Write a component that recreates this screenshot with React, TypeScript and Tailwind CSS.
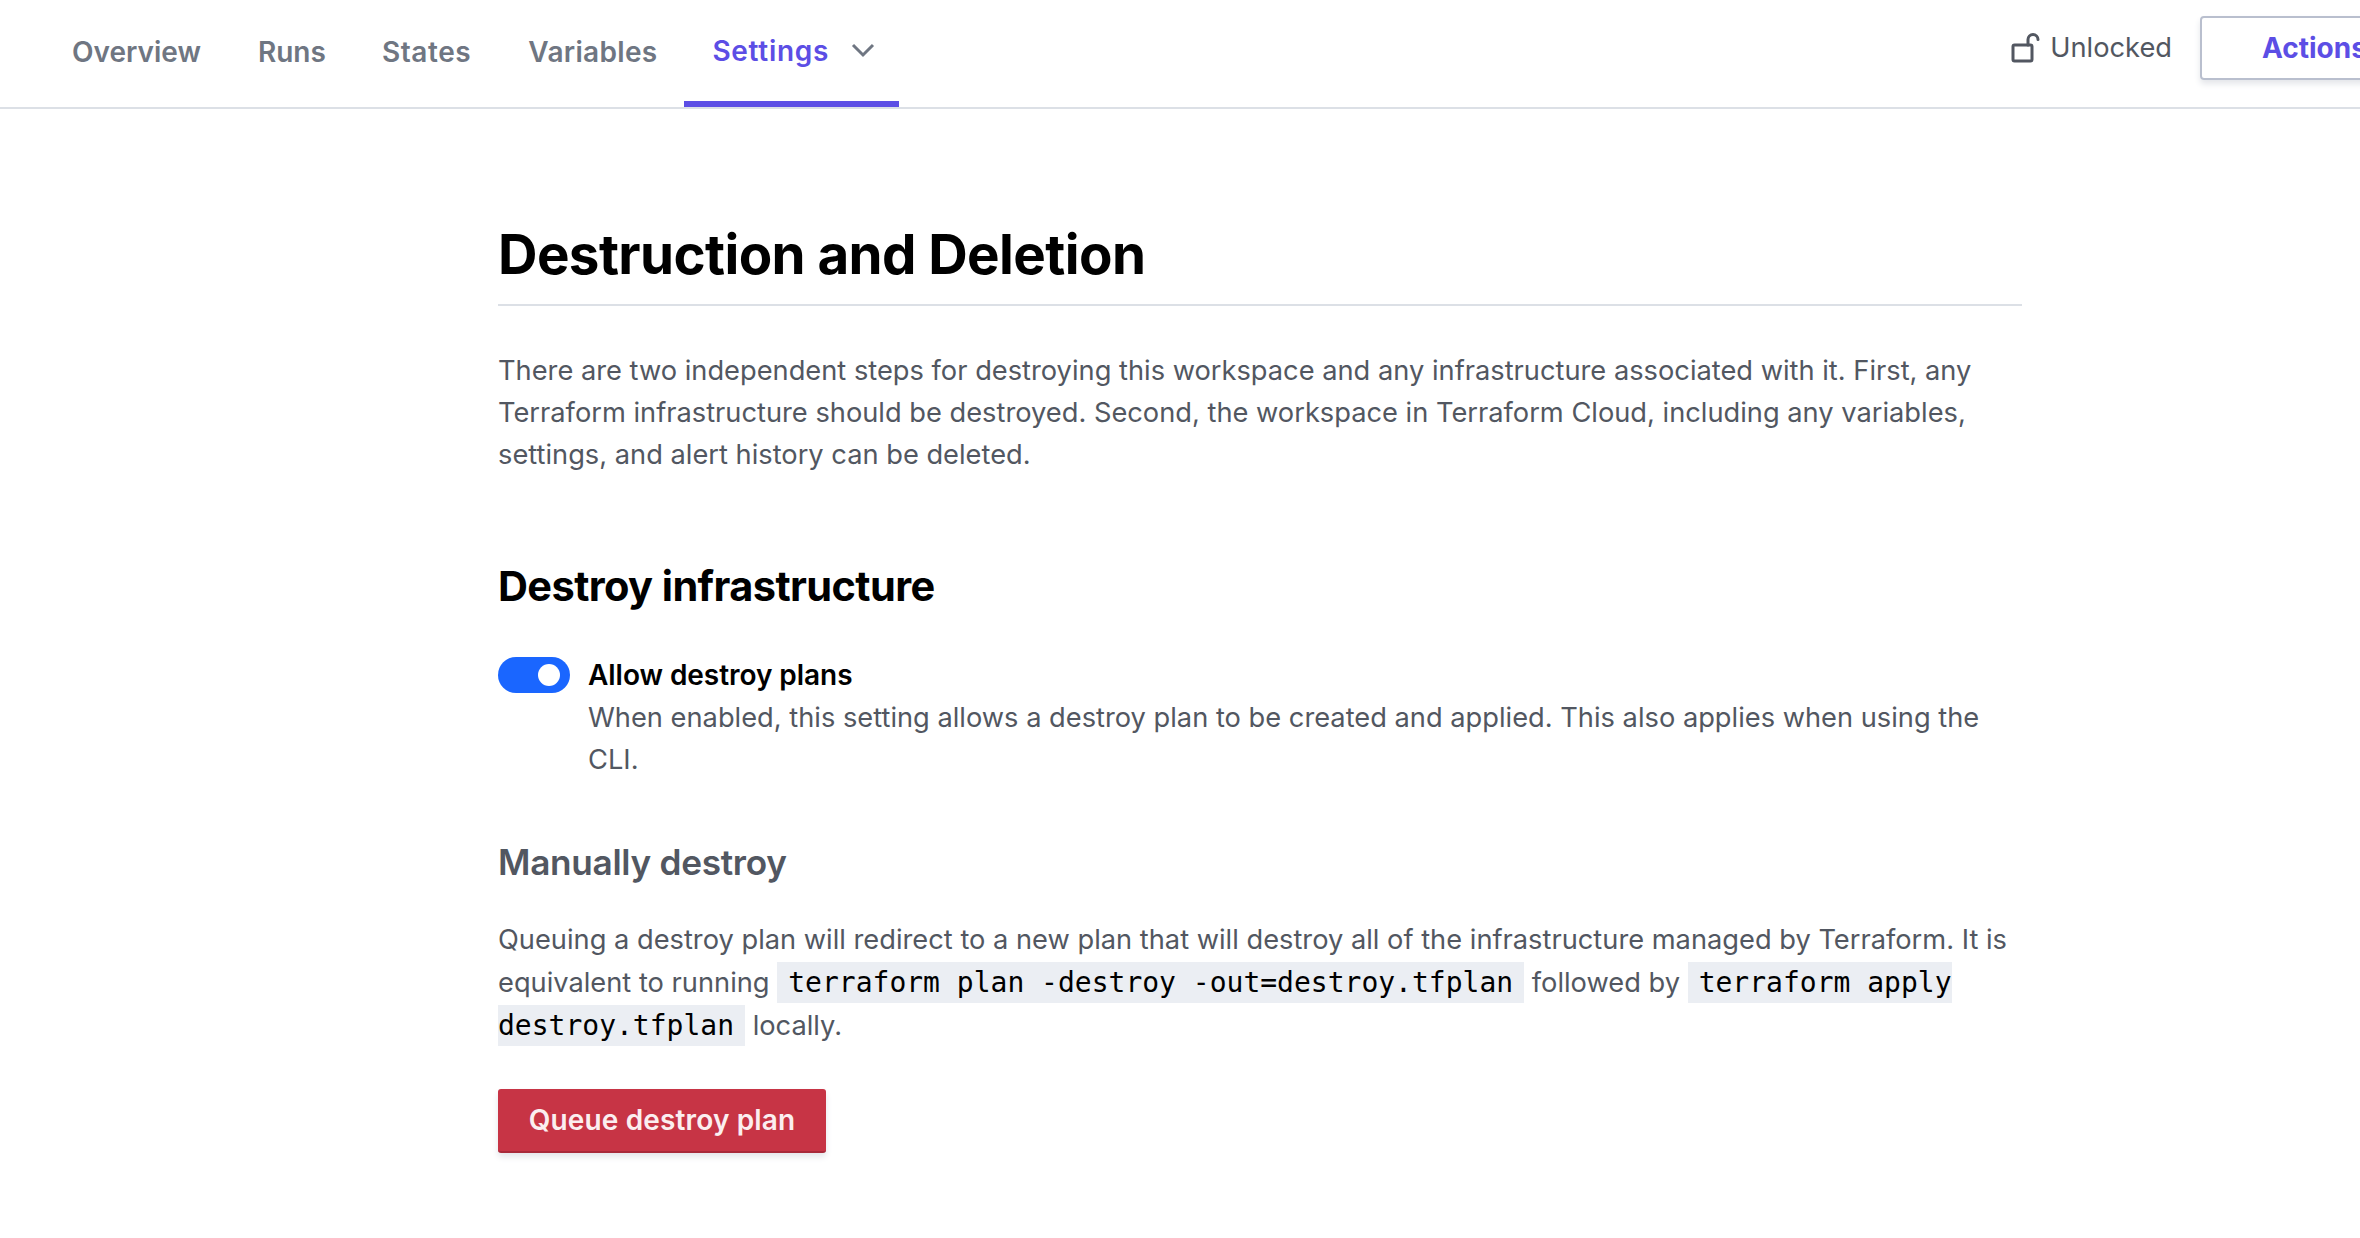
import React from "react";

const Code = ({ children }: { children: React.ReactNode }) => (
  <code className="bg-[#ebeef3] text-black px-[11px] py-[4px] text-[28px] [font-family:'DejaVu_Sans_Mono',monospace]">{children}</code>
);

export default function App() {
  return (
    <div className="w-[2360px] h-[1238px] overflow-hidden bg-white [font-family:Inter,sans-serif] text-[27.25px] leading-[42px] text-[#525761]">
      <div className="h-[109px] border-b-2 border-[#dce0e6] flex items-stretch pl-[72px]">
        <nav className="flex items-stretch text-[28px] font-semibold text-[#6f7682]">
          <div className="flex items-center mr-[57px] pb-[4px]">Overview</div>
          <div className="flex items-center mr-[56px] pb-[4px]">Runs</div>
          <div className="flex items-center mr-[57px] pb-[4px] tracking-[0.6px]">States</div>
          <div className="flex items-center mr-[27px] pb-[4px] tracking-[0.3px]">Variables</div>
          <div className="flex items-center gap-[22px] pl-[28px] pr-[24px] border-b-[6px] border-[#5c4ee5] text-[#5c4ee5] h-[107px]">
            <span className="tracking-[0.7px]">Settings</span>
            <svg width="24" height="24" viewBox="0 0 24 24" fill="none" stroke="#6f7682" strokeWidth="3" className="mb-[1px]"><path d="M2 7l10 10 10-10" /></svg>
          </div>
        </nav>
        <div className="ml-auto flex items-center -mr-[80px] mb-[12px]">
          <svg width="30" height="30" viewBox="0 0 30 30" fill="none" stroke="#525761" strokeWidth="3" strokeLinejoin="round" strokeLinecap="round">
            <rect x="2" y="12" width="19" height="16" rx="1.5" />
            <path d="M17 12V6.5a5 5 0 0 1 10 0" />
          </svg>
          <span className="ml-[9px] mr-[28px] text-[#525761]">Unlocked</span>
          <div className="w-[240px] h-[64px] border-2 border-[#b9bfce] rounded-[4px] shadow-[0_4px_6px_#e4e6ea] flex items-center pl-[60px] text-[28px] font-bold text-[#5c4ee5]">Actions</div>
        </div>
      </div>
      <main className="ml-[498px] w-[1524px]">
        <h1 className="mt-[113px] text-[54.7px] leading-[64px] font-bold text-black tracking-[-0.6px] pb-[18px] border-b-2 border-[#dce0e6]">Destruction and Deletion</h1>
        <p className="mt-[44px]">There are two independent steps for destroying this workspace and any infrastructure associated with it. First, any Terraform infrastructure should be destroyed. Second, the workspace in Terraform Cloud, including any variables, settings, and alert history can be deleted.</p>
        <h2 className="mt-[86px] text-[41.5px] leading-[48px] font-bold text-black tracking-[-0.6px]">Destroy infrastructure</h2>
        <div className="mt-[44px] flex items-start">
          <div className="mt-[3px] w-[72px] h-[36px] rounded-full bg-[#1a66ff] flex items-center justify-end pr-[10px] shrink-0">
            <div className="w-[22px] h-[22px] rounded-full bg-white" />
          </div>
          <div className="ml-[18px]">
            <div className="text-[28px] font-semibold text-black tracking-[-0.05px]">Allow destroy plans</div>
            <p className="mt-[1px]">When enabled, this setting allows a destroy plan to be created and applied. This also applies when using the CLI.</p>
          </div>
        </div>
        <h3 className="mt-[60px] text-[35.2px] leading-[42px] font-semibold text-[#525761] tracking-[-0.3px]">Manually destroy</h3>
        <p className="mt-[35px] leading-[43px]">Queuing a destroy plan will redirect to a new plan that will destroy all of the infrastructure managed by Terraform. It is equivalent to running <Code>terraform plan -destroy -out=destroy.tfplan</Code> followed by <Code>terraform apply destroy.tfplan</Code> locally.</p>
        <button className="mt-[42px] w-[328px] h-[64px] rounded-[3px] bg-[#c73445] border-b-2 border-[#a82a3a] shadow-[0_4px_6px_#e4e6ea] text-[28px] tracking-[0.15px] text-[#fbeef0] font-semibold">Queue destroy plan</button>
      </main>
    </div>
  );
}
